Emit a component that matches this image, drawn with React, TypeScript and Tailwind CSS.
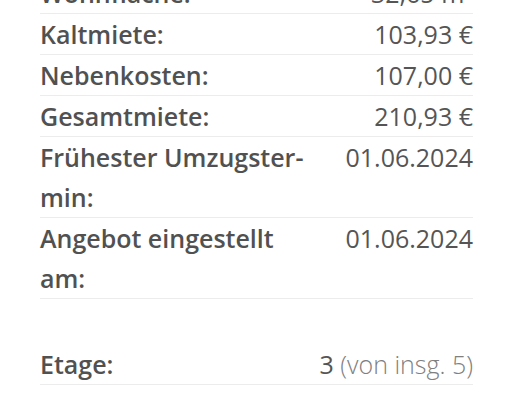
import React from 'react';

type Row = { label: React.ReactNode; value: React.ReactNode };

const rows: Row[] = [
  { label: 'Wohnfläche:', value: <>32,65 m²</> },
  { label: 'Kaltmiete:', value: '103,93 €' },
  { label: 'Nebenkosten:', value: '107,00 €' },
  { label: 'Gesamtmiete:', value: '210,93 €' },
  { label: <>Frühester Umzugs{'\u00AD'}ter{'\u00AD'}min:</>, value: '01.06.2024' },
  { label: 'Angebot eingestellt am:', value: '01.06.2024' },
];

function DetailRow({ label, value }: Row) {
  return (
    <div className="flex justify-between gap-4 border-b border-[#ececec]">
      <div className="w-[270px] font-semibold text-[#515151]">{label}</div>
      <div className="text-right text-[#555555] whitespace-nowrap">{value}</div>
    </div>
  );
}

export default function App() {
  return (
    <div
      className="min-h-screen bg-white text-[25px] leading-[40px]"
      style={{ fontFamily: '"Open Sans", "Noto Sans", sans-serif' }}
    >
      <div className="ml-[40px] w-[433px] -mt-[27px]">
        {rows.map((r, i) => (
          <DetailRow key={i} {...r} />
        ))}
        <div className="mt-[45px]">
          <DetailRow
            label="Etage:"
            value={
              <>
                3 <span className="font-light text-[#808080]">(von insg. 5)</span>
              </>
            }
          />
        </div>
      </div>
    </div>
  );
}
